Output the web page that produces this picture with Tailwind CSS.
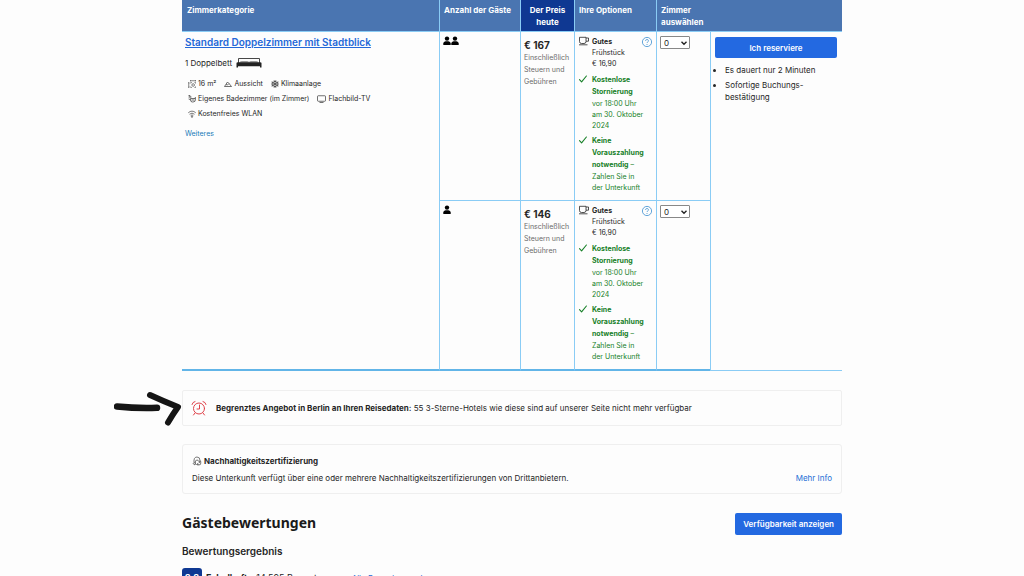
<!DOCTYPE html>
<html lang="de">
<head>
<meta charset="utf-8">
<meta name="viewport" content="width=device-width, initial-scale=1">
<title>Zimmerauswahl</title>
<script src="https://cdn.jsdelivr.net/npm/@tailwindcss/browser@4"></script>
</head>
<body class="bg-[#fdfdfd] font-['Inter','Liberation_Sans',sans-serif] text-[8px] leading-[12px] text-[#262626]">

<svg class="hidden">
  <symbol id="person" viewBox="0 0 8 10"><circle cx="4" cy="2.6" r="2.2"/><path d="M.3 9V7.400C.3 5.900 2 5.300 4 5.300s3.700.6 3.700 2.100V9z"/></symbol>
  <symbol id="cup" viewBox="0 0 12 10"><path d="M1.500 1.300h6.500v4.200a2 2 0 0 1-2 2H3.500a2 2 0 0 1-2-2zM8 2h2.500v3.200H8M1 8.800h8.500" fill="none" stroke="currentColor" stroke-width=".8"/></symbol>
  <symbol id="check" viewBox="0 0 10 10"><path d="M1.500 5.600 3.600 7.900 8.400 2" fill="none" stroke="currentColor" stroke-width="1.100" stroke-linecap="round" stroke-linejoin="round"/></symbol>
  <symbol id="help" viewBox="0 0 12 12"><circle cx="6" cy="6" r="4.600" fill="none" stroke="currentColor" stroke-width=".8"/><path d="M4.600 4.900a1.400 1.400 0 1 1 2 1.200c-.4.2-.6.4-.6.900" fill="none" stroke="currentColor" stroke-width=".8"/><circle cx="6" cy="8.400" r=".5" fill="currentColor"/></symbol>
  <symbol id="chevron" viewBox="0 0 8 8"><path d="M1.500 2.800 4 5.300 6.500 2.800" fill="none" stroke="#222" stroke-width="1.400"/></symbol>
</svg>

<main class="mx-auto w-full max-w-[660px]">
  <table class="w-full table-fixed border-separate border-spacing-0 text-left">
    <colgroup><col><col class="w-[81px]"><col class="w-[54px]"><col class="w-[82px]"><col class="w-[54px]"><col class="w-[132px]"></colgroup>
    <thead>
      <tr class="h-8 bg-[#4a75b1] align-top text-white">
        <th class="border-b border-[#8accf5] px-[5px] pt-1">Zimmerkategorie</th>
        <th class="border-b border-l border-[#8accf5] px-1 pt-1 whitespace-nowrap">Anzahl der Gäste</th>
        <th class="border-b border-l border-[#8accf5] bg-[#0f3892] px-1 pt-1 text-center">Der Preis heute</th>
        <th class="border-b border-l border-[#8accf5] px-1 pt-1">Ihre Optionen</th>
        <th class="border-b border-l border-[#8accf5] px-1 pt-1">Zimmer auswählen</th>
        <th class="border-b border-[#8accf5]" aria-label="Reservieren"></th>
      </tr>
    </thead>
    <tbody>
      <tr class="h-[169px] align-top">
        <td rowspan="2" class="border-b-2 border-b-[#62b5e8] px-[3px] pt-1">
          <a href="#" class="text-[10px] font-semibold text-[#2468d8] underline">Standard Doppelzimmer mit Stadtblick</a>
          <p class="mt-2 flex items-center gap-1">1 Doppelbett
            <svg class="h-3 w-[26px]" viewBox="0 0 26 12"><path d="M2.500 7V1.500h21V7" fill="none" stroke="#333" stroke-width=".9"/><path d="M3.500 5.500Q4 4.200 6 4.200h5q2 0 2 1 0-1 2-1h5q2 0 2.500 1.300z" fill="#777"/><path d="M.5 6Q.5 5.300 2 5.300h22q1.500 0 1.500.7v4.500h-1.500V9.200H2v1.300H.5z" fill="#222"/></svg>
          </p>
          <ul class="mt-[9px] flex max-w-[220px] flex-wrap gap-x-2 gap-y-[3px] pl-[3px] text-[7px]">
            <li class="flex items-center gap-0.5"><svg class="size-2" viewBox="0 0 16 16" fill="none" stroke="#333" stroke-width="1.200"><path d="M1.500 5v10M.5 6.500l1-1.500 1 1.500M.5 13.500l1 1.500 1-1.500M5 1.500h10M6 .5l-1.500 1L6 2.500M14 .5l1.500 1-1.500 1M5.500 7V5h2M13 5h2v2M15 13v2h-2M7.500 15h-2v-2"/><circle cx="10.300" cy="10" r="2.600"/></svg>16 m²</li>
            <li class="flex items-center gap-0.5"><svg class="size-2" viewBox="0 0 16 16" fill="none" stroke="#333" stroke-width="1.400"><path d="m1 13 6-9 3 3 5 6zM4 9l3 1 3-3"/></svg>Aussicht</li>
            <li class="flex items-center gap-0.5"><svg class="size-2" viewBox="0 0 16 16" fill="none" stroke="#333" stroke-width="1.500"><path d="M8 0v16M1 4l14 8M15 4 1 12M5.500 1.500 8 4l2.500-2.500M5.500 14.500 8 12l2.500 2.500M1 7.500l3.500-1.500L4 2.500M15 8.500 11.500 10l.5 3.500M15 7.500 11.500 6l.5-3.500M1 8.500 4.500 10 4 13.500"/></svg>Klimaanlage</li>
            <li class="flex items-center gap-0.5"><svg class="size-2" viewBox="0 0 16 16" fill="none" stroke="#333" stroke-width="1.400"><path d="M1 1h3v4M1 4h6M5 7h10v2a5 5 0 0 1-5 5H9a4 4 0 0 1-4-4zM14 7l1-3M7 10h6M2 7l1 3"/></svg>Eigenes Badezimmer (im Zimmer)</li>
            <li class="flex items-center gap-0.5"><svg class="h-2 w-[9px]" viewBox="0 0 18 16" fill="none" stroke="#333" stroke-width="1.400"><rect x="1" y="1.500" width="16" height="11" rx="1.500"/><path d="M5 15h8"/></svg>Flachbild-TV</li>
            <li class="flex items-center gap-0.5"><svg class="size-2" viewBox="0 0 16 16" fill="none" stroke="#333" stroke-width="1.300"><path d="M.5 5.500q7.500-6.500 15 0M3 8.500q5-4.500 10 0M5.500 11q2.500-2.200 5 0"/><circle cx="8" cy="13.500" r="1.300"/></svg>Kostenfreies WLAN</li>
          </ul>
          <a href="#" class="mt-2 block text-[7px] text-[#1a7ab8]">Weiteres</a>
        </td>
        <td class="border-b border-l border-[#8accf5] px-[3px] pt-1"><span class="flex" role="img" aria-label="2 Gäste"><svg class="h-[10px] w-2 fill-black"><use href="#person"/></svg><svg class="h-[10px] w-2 fill-black"><use href="#person"/></svg></span></td>
        <td class="border-b border-l border-[#8accf5] px-[3px] pt-[7px]">
          <strong class="block text-[10px]">€ 167</strong>
          <p class="mt-px text-[7px] text-[#6b6b6b]">Einschließlich Steuern und Gebühren</p>
        </td>
        <td class="border-b border-l border-[#8accf5] pt-1 pl-[3px]">
          <div class="flex text-[7px] leading-[11px]">
            <svg class="mr-[2px] h-[10px] w-3 shrink-0"><use href="#cup"/></svg>
            <p class="grow"><strong>Gutes</strong><br>Frühstück<br>€ 16,90</p>
            <button type="button" aria-label="Hilfe" class="mr-[3px] size-3 text-[#3d8fd0]"><svg class="size-3"><use href="#help"/></svg></button>
          </div>
          <div class="mt-[5px] flex text-[7px] leading-[11px] text-[#178028]">
            <svg class="mr-1 size-[10px] shrink-0"><use href="#check"/></svg>
            <p><strong class="block leading-[12px]">Kostenlose Stornierung</strong>vor 18:00 Uhr<br>am 30. Oktober 2024</p>
          </div>
          <div class="mt-1 flex text-[7px] leading-[11px] text-[#178028]">
            <svg class="mr-1 size-[10px] shrink-0"><use href="#check"/></svg>
            <p><span class="block leading-[12px]"><strong>Keine</strong><br><strong>Vorauszahlung</strong><br><strong>notwendig</strong> –</span>Zahlen Sie in<br>der Unterkunft</p>
          </div>
        </td>
        <td class="border-b border-l border-[#8accf5] px-[3px] pt-1">
          <div class="relative h-[13px] w-[30px]">
            <select aria-label="Anzahl Zimmer, 2 Gäste" class="h-full w-full appearance-none rounded-[1px] border border-[#888] bg-white pl-[3px] text-[8px] leading-[10px]"><option>0</option><option>1</option></select>
            <svg class="pointer-events-none absolute top-[3px] right-0.5 size-2"><use href="#chevron"/></svg>
          </div>
        </td>
        <td rowspan="2" class="border-b border-l border-[#8accf5] pt-[5px] pr-[5px] pl-1">
          <button type="button" class="h-[21px] w-full rounded-[2px] bg-[#2369e1] font-semibold text-white">Ich reserviere</button>
          <ul class="mt-1.5 list-disc space-y-[3px] pl-[10px]">
            <li>Es dauert nur 2 Minuten</li>
            <li>Sofortige Buchungs-<br>bestätigung</li>
          </ul>
        </td>
      </tr>
      <tr class="h-[170px] align-top">
        <td class="border-b-2 border-l border-[#8accf5] border-b-[#62b5e8] px-[3px] pt-1"><span class="flex" role="img" aria-label="1 Gast"><svg class="h-[10px] w-2 fill-black"><use href="#person"/></svg></span></td>
        <td class="border-b-2 border-l border-[#8accf5] border-b-[#62b5e8] px-[3px] pt-[7px]">
          <strong class="block text-[10px]">€ 146</strong>
          <p class="mt-px text-[7px] text-[#6b6b6b]">Einschließlich Steuern und Gebühren</p>
        </td>
        <td class="border-b-2 border-l border-[#8accf5] border-b-[#62b5e8] pt-1 pl-[3px]">
          <div class="flex text-[7px] leading-[11px]">
            <svg class="mr-[2px] h-[10px] w-3 shrink-0"><use href="#cup"/></svg>
            <p class="grow"><strong>Gutes</strong><br>Frühstück<br>€ 16,90</p>
            <button type="button" aria-label="Hilfe" class="mr-[3px] size-3 text-[#3d8fd0]"><svg class="size-3"><use href="#help"/></svg></button>
          </div>
          <div class="mt-[5px] flex text-[7px] leading-[11px] text-[#178028]">
            <svg class="mr-1 size-[10px] shrink-0"><use href="#check"/></svg>
            <p><strong class="block leading-[12px]">Kostenlose Stornierung</strong>vor 18:00 Uhr<br>am 30. Oktober 2024</p>
          </div>
          <div class="mt-1 flex text-[7px] leading-[11px] text-[#178028]">
            <svg class="mr-1 size-[10px] shrink-0"><use href="#check"/></svg>
            <p><span class="block leading-[12px]"><strong>Keine</strong><br><strong>Vorauszahlung</strong><br><strong>notwendig</strong> –</span>Zahlen Sie in<br>der Unterkunft</p>
          </div>
        </td>
        <td class="border-b-2 border-l border-[#8accf5] border-b-[#62b5e8] px-[3px] pt-1">
          <div class="relative h-[13px] w-[30px]">
            <select aria-label="Anzahl Zimmer, 1 Gast" class="h-full w-full appearance-none rounded-[1px] border border-[#888] bg-white pl-[3px] text-[8px] leading-[10px]"><option>0</option><option>1</option></select>
            <svg class="pointer-events-none absolute top-[3px] right-0.5 size-2"><use href="#chevron"/></svg>
          </div>
        </td>
      </tr>
    </tbody>
  </table>

  <section class="relative mt-[19px] flex min-h-9 items-center gap-2 rounded-[2px] border border-[#efefef] px-[7px]">
    <svg class="absolute top-0 right-full mr-px h-9 w-[68px]" viewBox="0 0 68 36" fill="none" stroke="#151515" stroke-linecap="round" stroke-linejoin="round"><path d="M3 15.500q20 2 40 1.300" stroke-width="6.500"/><path d="M36 4q13 6 28 12Q59 23 54 31.500" stroke-width="6"/></svg>
    <svg class="size-[18px] shrink-0" viewBox="0 0 18 18" fill="none" stroke="#e0434b" stroke-width="1" stroke-linecap="round"><circle cx="9" cy="9.500" r="5.500"/><path d="M9.500 6v4H7M5 14l-1.500 2M13 14l1.500 2M2 5.500Q2.500 3 5 2.500M16 5.500Q15.500 3 13 2.500"/></svg>
    <p><strong class="font-bold">Begrenztes Angebot in Berlin an Ihren Reisedaten:</strong> 55 3-Sterne-Hotels wie diese sind auf unserer Seite nicht mehr verfügbar</p>
  </section>

  <section class="mt-[18px] rounded-[3px] border border-[#efefef] px-[9px] pt-[10px] pb-[9px]">
    <h3 class="flex items-center gap-0.5 font-bold"><svg class="size-[10px]" viewBox="0 0 20 20" fill="none" stroke="#333" stroke-width="1.300"><path d="M4 13Q3 2 10 2q6 0 6 7M4 13l-2 2 4 3 1-3zM7 15q-2-7 3-7 3 0 3 3M16 9l2 3-4 1zM12 18q6 1 6-5M12 18l-3-1 3-2z"/></svg>Nachhaltigkeitszertifizierung</h3>
    <div class="mt-[5px] flex justify-between"><p>Diese Unterkunft verfügt über eine oder mehrere Nachhaltigkeitszertifizierungen von Drittanbietern.</p><a href="#" class="text-[#1f6fd6]">Mehr Info</a></div>
  </section>

  <div class="mt-[19px] flex items-start justify-between">
    <h2 class="font-['Noto_Sans',sans-serif] text-[14px] leading-[20px] font-bold text-[#1a1a1a]">Gästebewertungen</h2>
    <button type="button" class="h-[22px] rounded-[2px] bg-[#2369e1] px-2 font-semibold text-white">Verfügbarkeit anzeigen</button>
  </div>
  <h3 class="mt-[9px] text-[10px] leading-[14px] font-semibold">Bewertungsergebnis</h3>
  <div class="mt-[10px] flex items-center gap-1">
    <span class="flex h-5 w-5 items-center justify-center rounded-[3px] bg-[#0f3892] text-[9px] font-bold text-white">8,8</span>
    <strong class="text-[9px]">Fabelhaft</strong><span class="text-[9px]">· 14.595 Bewertungen</span>
    <a href="#" class="ml-1 text-[#1f6fd6]">Alle Bewertungen lesen</a>
  </div>
</main>
</body>
</html>
